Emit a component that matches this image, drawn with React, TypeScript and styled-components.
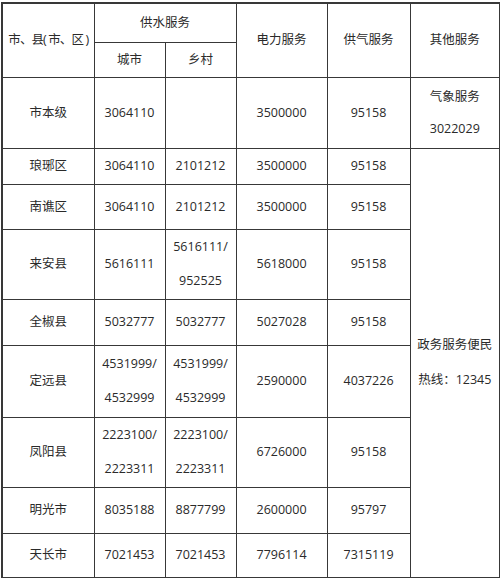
import React from "react";
import styled, { createGlobalStyle } from "styled-components";

const Global = createGlobalStyle`
  html, body { margin: 0; padding: 0; background: #fff; }
  body { font-family: "Open Sans", "Noto Sans CJK SC", sans-serif; }
`;

const Page = styled.div`
  width: 500px;
  height: 578px;
  padding: 2px 1px 0 1px;
  box-sizing: border-box;
  background: #fff;
`;

const Table = styled.table`
  width: 498px;
  border-collapse: collapse;
  table-layout: fixed;
  border: 2px solid #383838;
  color: #2a2a2a;
  font-size: 12.5px;
`;

const Row = styled.tr<{ $h: number }>`
  height: ${(p) => p.$h}px;
`;

const Cell = styled.td<{ $tight?: boolean }>`
  border: 1px solid #383838;
  padding: 0;
  text-align: center;
  vertical-align: middle;
  line-height: 18px;
  white-space: nowrap;
  letter-spacing: ${(p) => (p.$tight ? "-0.9px" : "0")};
`;

const Stack = styled.div<{ $gap: number }>`
  display: flex;
  flex-direction: column;
  align-items: center;
  gap: ${(p) => p.$gap}px;
`;

type Val = string | string[];

const Value: React.FC<{ v: Val; gap?: number }> = ({ v, gap = 15 }) =>
  Array.isArray(v) ? (
    <Stack $gap={gap}>
      {v.map((s) => (
        <span key={s}>{s}</span>
      ))}
    </Stack>
  ) : (
    <>{v}</>
  );

type RowData = { name: string; city: Val; rural: Val; power: string; gas: string; h: number };

const rows: RowData[] = [
  { name: "琅琊区", city: "3064110", rural: "2101212", power: "3500000", gas: "95158", h: 36 },
  { name: "南谯区", city: "3064110", rural: "2101212", power: "3500000", gas: "95158", h: 45 },
  { name: "来安县", city: "5616111", rural: ["5616111/", "952525"], power: "5618000", gas: "95158", h: 70 },
  { name: "全椒县", city: "5032777", rural: "5032777", power: "5027028", gas: "95158", h: 46 },
  { name: "定远县", city: ["4531999/", "4532999"], rural: ["4531999/", "4532999"], power: "2590000", gas: "4037226", h: 72 },
  { name: "凤阳县", city: ["2223100/", "2223311"], rural: ["2223100/", "2223311"], power: "6726000", gas: "95158", h: 70 },
  { name: "明光市", city: "8035188", rural: "8877799", power: "2600000", gas: "95797", h: 46 },
  { name: "天长市", city: "7021453", rural: "7021453", power: "7796114", gas: "7315119", h: 45 },
];

export default function App() {
  return (
    <Page>
      <Global />
      <Table>
        <colgroup>
          <col style={{ width: 92 }} />
          <col style={{ width: 71 }} />
          <col style={{ width: 71 }} />
          <col style={{ width: 91 }} />
          <col style={{ width: 83 }} />
          <col style={{ width: 90 }} />
        </colgroup>
        <tbody>
          <Row $h={39}>
            <Cell rowSpan={2} $tight>
              市、县( 市、区 )
            </Cell>
            <Cell colSpan={2}>供水服务</Cell>
            <Cell rowSpan={2}>电力服务</Cell>
            <Cell rowSpan={2}>供气服务</Cell>
            <Cell rowSpan={2}>其他服务</Cell>
          </Row>
          <Row $h={35}>
            <Cell>城市</Cell>
            <Cell>乡村</Cell>
          </Row>
          <Row $h={71}>
            <Cell>市本级</Cell>
            <Cell>3064110</Cell>
            <Cell></Cell>
            <Cell>3500000</Cell>
            <Cell>95158</Cell>
            <Cell>
              <Value v={["气象服务", "3022029"]} gap={14} />
            </Cell>
          </Row>
          {rows.map((r, i) => (
            <Row $h={r.h} key={r.name}>
              <Cell>{r.name}</Cell>
              <Cell>
                <Value v={r.city} gap={16} />
              </Cell>
              <Cell>
                <Value v={r.rural} gap={16} />
              </Cell>
              <Cell>{r.power}</Cell>
              <Cell>{r.gas}</Cell>
              {i === 0 && (
                <Cell rowSpan={rows.length}>
                  <Value v={["政务服务便民", "热线：12345"]} gap={17} />
                </Cell>
              )}
            </Row>
          ))}
        </tbody>
      </Table>
    </Page>
  );
}
